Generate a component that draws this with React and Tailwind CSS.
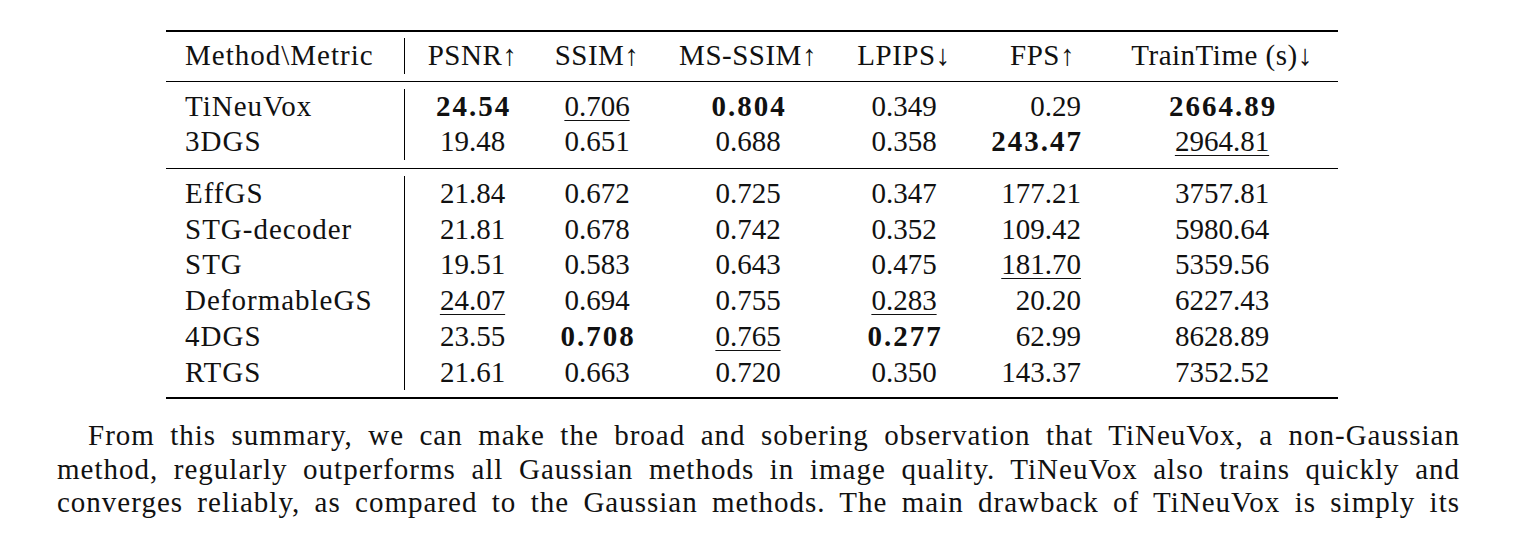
import React from 'react';

// Results table: PSNR / SSIM / MS-SSIM / LPIPS / FPS / TrainTime per method
const COLS = 'grid grid-cols-[238px_136px_114px_188px_124px_140px_232px]';

const header = ['Method\\Metric', 'PSNR↑', 'SSIM↑', 'MS-SSIM↑', 'LPIPS↓', 'FPS↑', 'TrainTime (s)↓'];

const baselines = [
  ['TiNeuVox', [['24.54', 'b'], ['0.706', 'u'], ['0.804', 'b'], ['0.349'], ['0.29'], ['2664.89', 'b']]],
  ['3DGS', [['19.48'], ['0.651'], ['0.688'], ['0.358'], ['243.47', 'b'], ['2964.81', 'u']]],
];

const gaussians = [
  ['EffGS', [['21.84'], ['0.672'], ['0.725'], ['0.347'], ['177.21'], ['3757.81']]],
  ['STG-decoder', [['21.81'], ['0.678'], ['0.742'], ['0.352'], ['109.42'], ['5980.64']]],
  ['STG', [['19.51'], ['0.583'], ['0.643'], ['0.475'], ['181.70', 'u'], ['5359.56']]],
  ['DeformableGS', [['24.07', 'u'], ['0.694'], ['0.755'], ['0.283', 'u'], ['20.20'], ['6227.43']]],
  ['4DGS', [['23.55'], ['0.708', 'b'], ['0.765', 'u'], ['0.277', 'b'], ['62.99'], ['8628.89']]],
  ['RTGS', [['21.61'], ['0.663'], ['0.720'], ['0.350'], ['143.37'], ['7352.52']]],
];

function Value({ v, mark }) {
  if (mark === 'b') return <span className="font-bold tracking-[2px] mr-[-2px]">{v}</span>;
  if (mark === 'u') return <span className="underline decoration-1 underline-offset-[4px]">{v}</span>;
  return <span>{v}</span>;
}

function Cell({ index, children }) {
  // first numeric column carries the vertical rule, FPS column is right aligned
  const align = index === 4 ? 'justify-end pr-[25px]' : 'justify-center';
  const rule = index === 0 ? 'border-l border-black' : '';
  return <div className={`h-full flex items-center whitespace-nowrap ${align} ${rule}`}>{children}</div>;
}

function Row({ name, values }) {
  return (
    <div className={`${COLS} h-[35.7px] items-center`}>
      <div className="pl-[19px] tracking-[1px] whitespace-nowrap">{name}</div>
      {values.map(([v, mark], i) => (
        <Cell key={i} index={i}>
          <Value v={v} mark={mark} />
        </Cell>
      ))}
    </div>
  );
}

export default function App() {
  return (
    <div className="w-[1516px] h-[552px] bg-white text-[#111] [font-family:Liberation_Serif,Times_New_Roman,serif] text-[29px] leading-[35.7px] pt-[30px] overflow-hidden">
      <div className="ml-[166px] w-[1172px]">
        <div className="h-[2px] bg-black" />

        <div className="pt-[6px] pb-[7px]">
          <div className={`${COLS} h-[35.7px] items-center`}>
            <div className="pl-[19px] tracking-[1px] whitespace-nowrap">{header[0]}</div>
            {header.slice(1).map((h, i) => (
              <Cell key={h} index={i}>
                <span className={i === 4 ? 'tracking-[0.5px] mr-[6px]' : 'tracking-[0.5px]'}>{h}</span>
              </Cell>
            ))}
          </div>
        </div>

        <div className="h-px bg-black" />

        <div className="pt-[7px] pb-[8px]">
          {baselines.map(([name, values]) => (
            <Row key={name} name={name} values={values} />
          ))}
        </div>

        <div className="h-px bg-black" />

        <div className="pt-[7px] pb-[7px]">
          {gaussians.map(([name, values]) => (
            <Row key={name} name={name} values={values} />
          ))}
        </div>

        <div className="h-[2px] bg-black" />
      </div>

      <div className="mt-[20px] ml-[57px] w-[1403px] leading-[33.5px] tracking-[1px]">
        <span className="block pl-[31px] text-justify [text-align-last:justify]">
          From this summary, we can make the broad and sobering observation that TiNeuVox, a non-Gaussian
        </span>
        <span className="block text-justify [text-align-last:justify]">
          method, regularly outperforms all Gaussian methods in image quality.  TiNeuVox also trains quickly and
        </span>
        <span className="block text-justify [text-align-last:justify]">
          converges reliably, as compared to the Gaussian methods.  The main drawback of TiNeuVox is simply its
        </span>
      </div>
    </div>
  );
}
